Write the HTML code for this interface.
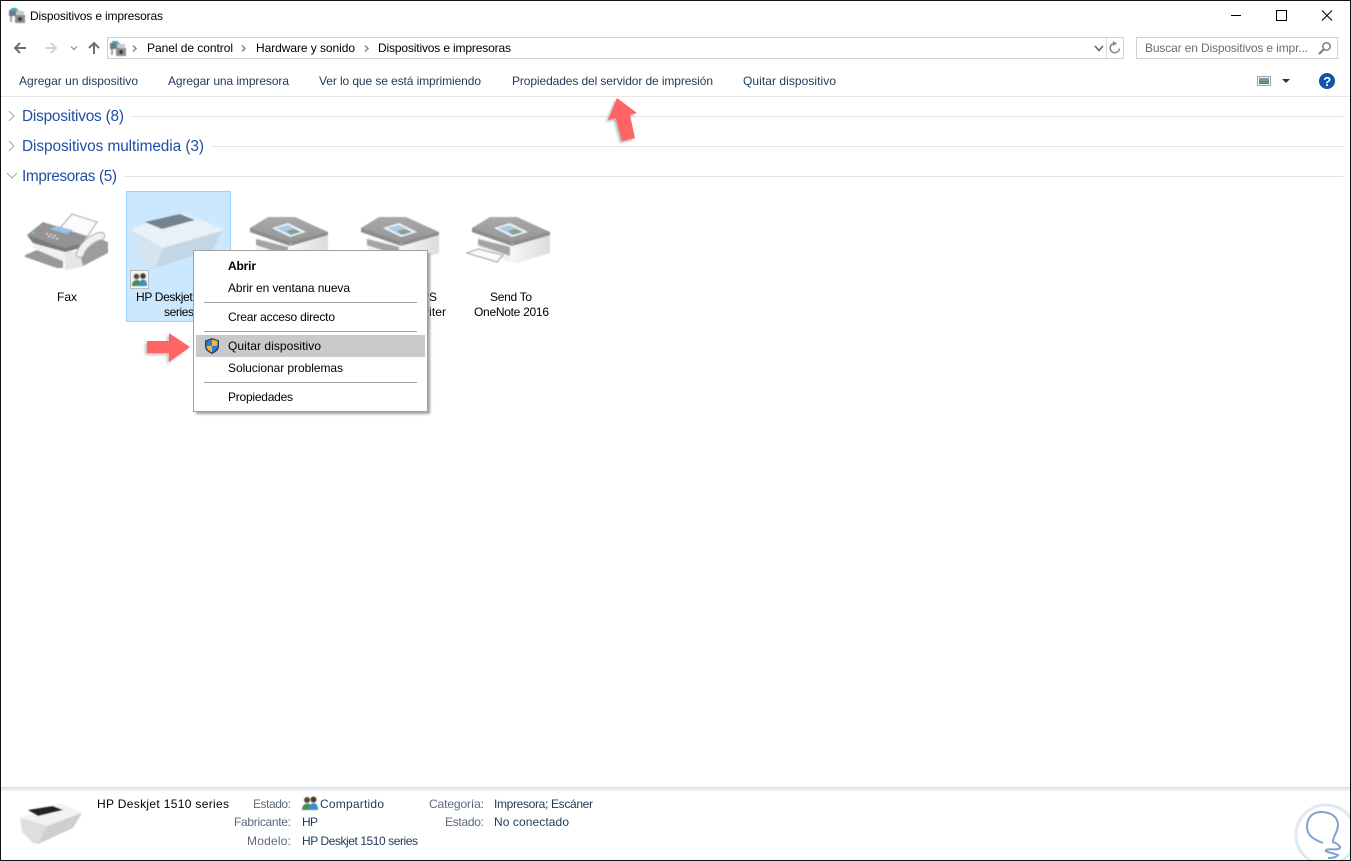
<!DOCTYPE html>
<html lang="es">
<head>
<meta charset="utf-8">
<title>Dispositivos e impresoras</title>
<style>
html,body{margin:0;padding:0;background:#fff;width:1351px;height:861px;overflow:hidden}
svg{display:block}
text{font-family:"Liberation Sans",sans-serif;font-size:12px;fill:#000}
.tb{fill:#1e395b}
.gr{font-size:15.4px;fill:#1f4fa3}
.lb{fill:#5b6a7d}
.vl{fill:#1e395b}
.nav{fill:none;stroke:#6e6e6e;stroke-width:2}
</style>
</head>
<body>
<svg xmlns="http://www.w3.org/2000/svg" width="1351" height="861" viewBox="0 0 1351 861">
<defs>
<filter id="s" x="-5%" y="-5%" width="110%" height="110%"><feGaussianBlur stdDeviation=".45"/></filter>
<filter id="sh" x="-20%" y="-20%" width="140%" height="140%"><feGaussianBlur stdDeviation="1.2"/></filter>
<linearGradient id="lid" x1="0" y1="0" x2="0" y2="1"><stop offset="0" stop-color="#a9a9a9"/><stop offset="1" stop-color="#939393"/></linearGradient>
<linearGradient id="side" x1="0" y1="0" x2="1" y2="0"><stop offset="0" stop-color="#f7f7f7"/><stop offset="1" stop-color="#dcdcdc"/></linearGradient>
<linearGradient id="foot" x1="0" y1="0" x2="0" y2="1"><stop offset="0" stop-color="#d2e0ee"/><stop offset="1" stop-color="#f4f7fa"/></linearGradient>
<g id="printer">
<polygon points="6,20 38,28 38,45 6,33" fill="#f1f1f1"/>
<polygon points="6,22 38,30 38,39 6,28" fill="#a4a4a4"/>
<polygon points="38,28 78,17 78,36 45,46 38,45" fill="url(#side)"/>
<polygon points="0,11 18,0 45,0 78,15 78,18 40,29 0,15" fill="url(#lid)"/>
<polygon points="0,11 40,25 78,15 78,18 40,29 0,15" fill="#8c8c8c"/>
<polygon points="22,11 38,6 56,15 40,20" fill="#eef3f7"/>
<polygon points="26,11 38,8 51,15 40,18" fill="#a9cbe4"/>
<polygon points="36,14 44,12 51,15 41,18" fill="#8a9e8c"/>
<rect x="39.500" y="26" width="2" height="2" fill="#62d77c"/>
</g>
</defs>

<rect width="1351" height="861" fill="#fff"/>

<!-- Title bar -->
<g transform="translate(9,8)" filter="url(#s)">
<rect x="0" y="2" width="10" height="6" fill="#6b7a80"/>
<rect x="2" y="0" width="6" height="3" fill="#3aa0c8"/>
<rect x="4" y="0" width="4" height="2" fill="#49b36a"/>
<rect x="1" y="8" width="2" height="6" fill="#9aa0a4"/>
<rect x="6" y="7" width="10" height="8" fill="#8a8f93"/>
<rect x="7" y="3" width="8" height="4" fill="#c7ccd0"/>
<circle cx="11" cy="11" r="2" fill="#2f3336"/>
</g>
<text x="30" y="20" textLength="133">Dispositivos e impresoras</text>
<line x1="1231" y1="15.500" x2="1241" y2="15.500" stroke="#000"/>
<rect x="1276.500" y="10.500" width="10" height="10" fill="none" stroke="#000"/>
<path d="M1322 10.500L1332 20.500M1332 10.500L1322 20.500" stroke="#000" fill="none"/>

<!-- Nav -->
<path class="nav" d="M26 48H15M20 43L15 48L20 53"/>
<path d="M56 48H45M51 43L56 48L51 53" fill="none" stroke="#d4d4d4" stroke-width="2"/>
<path d="M71 46.500L74 49.500L77 46.500" fill="none" stroke="#9a9a9a" stroke-width="1.400"/>
<path class="nav" d="M94 54V43M89 48L94 43L99 48"/>

<!-- Address -->
<rect x="107.500" y="37.500" width="1016" height="21" fill="#fff" stroke="#d0d0d0"/>
<line x1="1106.500" y1="38" x2="1106.500" y2="58" stroke="#d9d9d9"/>
<g transform="translate(110,41)" filter="url(#s)">
<rect x="0" y="2" width="10" height="6" fill="#6b7a80"/>
<rect x="2" y="0" width="6" height="3" fill="#3aa0c8"/>
<rect x="4" y="0" width="4" height="2" fill="#49b36a"/>
<rect x="1" y="8" width="2" height="6" fill="#9aa0a4"/>
<rect x="6" y="7" width="10" height="8" fill="#8a8f93"/>
<rect x="7" y="3" width="8" height="4" fill="#c7ccd0"/>
<circle cx="11" cy="11" r="2" fill="#2f3336"/>
</g>
<path d="M133 45.500L136 48.500L133 51.500M242 45.500L245 48.500L242 51.500M365 45.500L368 48.500L365 51.500" fill="none" stroke="#888" stroke-width="1.500"/>
<text x="147" y="52" textLength="86">Panel de control</text>
<text x="256" y="52" textLength="99">Hardware y sonido</text>
<text x="378" y="52" textLength="133">Dispositivos e impresoras</text>
<path d="M1095 46L1099 50.500L1103 46" fill="none" stroke="#666" stroke-width="1.600"/>
<path d="M1119.500 47.500A4.700 4.700 0 1 1 1115 43.500" fill="none" stroke="#8a8a8a" stroke-width="1.600" transform="rotate(15 1115.500 48)"/>
<path d="M1113 41L1117 43.500L1113 46Z" fill="#8a8a8a"/>

<!-- Search -->
<rect x="1136.500" y="37.500" width="201" height="21" fill="#fff" stroke="#d0d0d0"/>
<text x="1145" y="52" textLength="163" style="fill:#6d6d6d">Buscar en Dispositivos e impr...</text>
<circle cx="1326.500" cy="46.500" r="3.700" fill="none" stroke="#7d7d7d" stroke-width="1.500"/>
<line x1="1323.500" y1="49.500" x2="1319" y2="54" stroke="#7d7d7d" stroke-width="2"/>

<!-- Toolbar -->
<text class="tb" x="19" y="85" textLength="119">Agregar un dispositivo</text>
<text class="tb" x="168" y="85" textLength="121">Agregar una impresora</text>
<text class="tb" x="319" y="85" textLength="162">Ver lo que se está imprimiendo</text>
<text class="tb" x="512" y="85" textLength="201">Propiedades del servidor de impresión</text>
<text class="tb" x="743" y="85" textLength="93">Quitar dispositivo</text>
<rect x="1257.500" y="76.500" width="13" height="9" fill="#f1f4f6" stroke="#a8a8a8"/>
<rect x="1259" y="78" width="10" height="3" fill="#6f97bb"/>
<rect x="1259" y="81" width="10" height="3" fill="#6c8a72"/>
<path d="M1282 79H1290L1286 83Z" fill="#1e395b"/>
<circle cx="1327" cy="81" r="8" fill="#0f56a8"/>
<text x="1323.200" y="86" style="font-size:13px;font-weight:bold;fill:#fff">?</text>
<line x1="1" y1="96.500" x2="1350" y2="96.500" stroke="#e6e6e6"/>

<!-- Groups -->
<path d="M9 111L14 116L9 121" fill="none" stroke="#a6a6a6"/>
<text class="gr" x="22" y="121" textLength="102">Dispositivos (8)</text>
<line x1="131" y1="116.500" x2="1343" y2="116.500" stroke="#e3e3e3"/>
<path d="M9 141L14 146L9 151" fill="none" stroke="#a6a6a6"/>
<text class="gr" x="22" y="151" textLength="182">Dispositivos multimedia (3)</text>
<line x1="211" y1="146.500" x2="1343" y2="146.500" stroke="#e3e3e3"/>
<path d="M7 173L12 178L17 173" fill="none" stroke="#a6a6a6"/>
<text class="gr" x="22" y="181" textLength="95">Impresoras (5)</text>
<line x1="124" y1="176.500" x2="1343" y2="176.500" stroke="#e3e3e3"/>

<!-- Fax -->
<g filter="url(#s)">
<polygon points="60,228 72,214 97,222 87,237" fill="#fbfbfb" stroke="#a5a5a5"/>
<polygon points="25,255 37,250 63,260 63,268 57,268 25,257" fill="#999"/>
<polygon points="33,243 65,252 65,262 37,250 33,248" fill="#f0f0f0"/>
<polygon points="65,250 81,252 83,267 65,270" fill="#e6e6e6"/>
<polygon points="27,235 43,222 87,236 80,248 65,252 33,243" fill="#949494"/>
<polygon points="27,235 65,248 80,244 80,248 65,252 33,243" fill="#7c7c7c"/>
<polygon points="50,229 57,226 73,230 67,234" fill="#93c3ec"/>
<g fill="#d8d8d8"><rect x="46" y="233" width="2" height="1.500"/><rect x="50" y="234" width="2" height="1.500"/><rect x="54" y="235" width="2" height="1.500"/><rect x="48" y="236" width="2" height="1.500"/><rect x="52" y="237" width="2" height="1.500"/><rect x="56" y="238" width="2" height="1.500"/></g>
<rect x="32" y="231.500" width="2.500" height="2.500" fill="#5fd37b"/>
<polygon points="80,254 100,239 108,242 108,253 83,266" fill="#9d9d9d"/>
<path d="M80 254C83 245 92 238 101 236" fill="none" stroke="#a8a8a8" stroke-width="8.500" stroke-linecap="round"/>
<path d="M80 254C83 245 92 238 101 236" fill="none" stroke="#f0f0f0" stroke-width="6.500" stroke-linecap="round"/>
</g>
<text x="67" y="301" text-anchor="middle">Fax</text>

<!-- Selected tile -->
<rect x="126.500" y="191.500" width="104" height="130" fill="#cce8ff" stroke="#99d1ff"/>
<g filter="url(#s)">
<polygon points="132,228 183,213 222,228 222,231 163,248 133,232" fill="#e9f1f7"/>
<polygon points="133,231 163,248 155,268 145,262 140,252" fill="#d7e4ef"/>
<polygon points="163,248 222,231 213,250 155,268" fill="#c3d6e5"/>
<polygon points="145,222 180,214 195,220 162,229" fill="#74838e"/>
</g>
<rect x="130.500" y="270.500" width="18" height="18" fill="#f4f4f4" stroke="#bcbcbc"/>
<g filter="url(#s)">
<circle cx="136.500" cy="276.500" r="2.800" fill="#5a4a3a"/>
<circle cx="143" cy="276" r="2.800" fill="#4a3a2a"/>
<path d="M132 286C132 281 135 280 137 280C139 280 141 282 141 286Z" fill="#3f8f57"/>
<path d="M139 286C139 281 141 279.500 143 279.500C145 279.500 147 281 147 286Z" fill="#3a8ec6"/>
</g>
<text x="136" y="301" textLength="85">HP Deskjet 1510</text>
<text x="164" y="316" textLength="30">series</text>

<!-- Printers -->
<g filter="url(#s)">
<use href="#printer" x="250" y="217"/>
<use href="#printer" x="361" y="217"/>
<use href="#printer" x="472" y="217"/>
<polygon points="467,253 478,249 503,255 497,262" fill="#fafafa" stroke="#9a9a9a"/>
</g>
<text x="363" y="301" textLength="74">Microsoft XPS</text>
<text x="355" y="316" textLength="91">Document Writer</text>
<text x="490" y="301" textLength="42">Send To</text>
<text x="474" y="316" textLength="75">OneNote 2016</text>

<!-- Arrow 1 (up, toolbar) -->
<polygon points="615,100 606,122 614,120 620,143 633,140 628,117 635,115" fill="#777" opacity=".55" filter="url(#sh)"/>
<polygon points="617,98 608,120 616,118 622,141 635,138 630,115 637,113" fill="#ff6464"/>

<!-- Context menu -->
<rect x="196" y="253" width="234" height="161" fill="#777" opacity=".7" filter="url(#sh)"/>
<rect x="193.500" y="250.500" width="234" height="161" fill="#fff" stroke="#a0a0a0"/>
<text x="228" y="270" textLength="28" style="font-weight:bold">Abrir</text>
<text x="228" y="292" textLength="122">Abrir en ventana nueva</text>
<line x1="204" y1="302.500" x2="417" y2="302.500" stroke="#a0a0a0"/>
<text x="228" y="321" textLength="107">Crear acceso directo</text>
<line x1="204" y1="331.500" x2="417" y2="331.500" stroke="#a0a0a0"/>
<rect x="196" y="335" width="229" height="22" fill="#c9c9c9"/>
<path d="M212 338L219 340.500V346C219 350 215.500 352.500 212 354C208.500 352.500 205 350 205 346V340.500Z" fill="#23405f"/>
<path d="M212 339.500V346H206.500V341Z" fill="#2f7fd0"/>
<path d="M212 339.500V346H217.500V341Z" fill="#f4b63a"/>
<path d="M212 346V352.500C209 351 206.500 349 206.500 346Z" fill="#f4b63a"/>
<path d="M212 346V352.500C215 351 217.500 349 217.500 346Z" fill="#2f7fd0"/>
<text x="228" y="350" textLength="93">Quitar dispositivo</text>
<text x="228" y="372" textLength="115">Solucionar problemas</text>
<line x1="204" y1="382.500" x2="417" y2="382.500" stroke="#a0a0a0"/>
<text x="228" y="401" textLength="65">Propiedades</text>

<!-- Arrow 2 (right, menu) -->
<polygon points="145,343 167,343 167,335 188,349 167,364 167,355 145,355" fill="#777" opacity=".45" filter="url(#sh)"/>
<polygon points="147,341 169,341 169,333 190,347 169,362 169,353 147,353" fill="#ff6464"/>

<!-- Footer -->
<rect x="1" y="787" width="1349" height="4" fill="url(#foot)"/>
<g filter="url(#s)">
<polygon points="20,818 60,803 82,813 47,826" fill="#f2f2f2"/>
<polygon points="20,818 47,826 38,844 33,843 22,832" fill="#dedede"/>
<polygon points="47,826 82,813 73,828 38,844" fill="#cfcfcf"/>
<polygon points="28,810 53,806 63,810 38,816" fill="#222"/>
</g>
<text x="97" y="808" textLength="132">HP Deskjet 1510 series</text>
<text class="lb" x="253" y="808" textLength="38">Estado:</text>
<text class="lb" x="234" y="826" textLength="57">Fabricante:</text>
<text class="lb" x="247" y="845" textLength="44">Modelo:</text>
<g filter="url(#s)">
<circle cx="307" cy="800" r="3" fill="#5a4a3a"/>
<circle cx="313.500" cy="799.500" r="3" fill="#4a3a2a"/>
<path d="M302 810C302 805 305 803.500 307.500 803.500C310 803.500 312 805 312 810Z" fill="#3f8f57"/>
<path d="M309 810C309 805 311.500 803 313.500 803C316 803 318 805 318 810Z" fill="#3a8ec6"/>
</g>
<text class="vl" x="320" y="808" textLength="64">Compartido</text>
<text class="vl" x="302" y="826" textLength="16">HP</text>
<text class="vl" x="302" y="845" textLength="116">HP Deskjet 1510 series</text>
<text class="lb" x="429" y="808" textLength="55">Categoría:</text>
<text class="lb" x="445" y="826" textLength="39">Estado:</text>
<text class="vl" x="494" y="808" textLength="99">Impresora; Escáner</text>
<text class="vl" x="494" y="826" textLength="75">No conectado</text>

<!-- Watermark -->
<circle cx="1326" cy="835" r="30" fill="#fff" fill-opacity=".7" stroke="#dfe8f3" stroke-width="3"/>
<path d="M1323 843C1315 840 1307 836 1307 827C1307 817 1313 812 1321 812C1331 812 1338 817 1338 825C1338 832 1333 836 1333 842C1336 843 1341 846 1340 848C1337 851 1330 848 1326 850C1324 852 1333 853 1338 855C1336 858 1331 858 1328 858" fill="none" stroke="#7fa3cf" stroke-width="2"/>

<!-- Window border -->
<rect x=".5" y=".5" width="1350" height="860" fill="none" stroke="#111"/>
</svg>
</body>
</html>
